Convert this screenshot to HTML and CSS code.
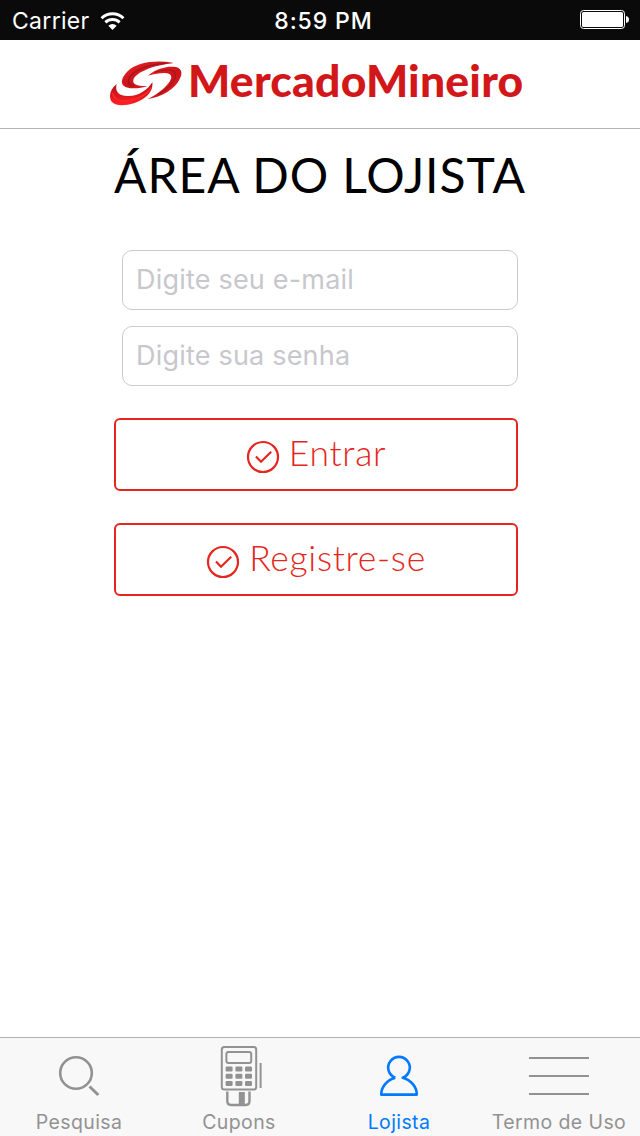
FILE: index.html
```html
<!DOCTYPE html>
<html lang="pt-BR">
<head>
    <meta charset="UTF-8">
    <meta name="viewport" content="width=device-width, initial-scale=1.0">
    <title>Mercado Mineiro</title>
    <link rel="stylesheet" href="styles.css">
</head>
<body>
    <div class="status-bar">
        <div class="carrier">
            <span>Carrier</span>
            <svg class="wifi" width="25" height="20" viewBox="0 0 26 20">
                <path d="M1.6 7.2 A16.2 16.2 0 0 1 24.4 7.2" fill="none" stroke="#fff" stroke-width="3"/>
                <path d="M5.6 11.4 A10.6 10.6 0 0 1 20.4 11.4" fill="none" stroke="#fff" stroke-width="3"/>
                <path d="M13 19.4 L8.7 14.9 A5.9 5.9 0 0 1 17.3 14.9 Z" fill="#fff"/>
            </svg>
        </div>
        <span class="clock">8:59 PM</span>
        <svg class="battery" width="50" height="20" viewBox="0 0 50 20">
            <rect x="0.5" y="0.5" width="44" height="18" rx="3" fill="none" stroke="#fff"/>
            <rect x="2" y="2" width="41" height="15" rx="1.5" fill="#fff"/>
            <path d="M46 6 Q49 6.5 49 9.5 Q49 12.5 46 13 Z" fill="#fff"/>
        </svg>
    </div>

    <header class="header">
        <svg class="logo-mark" width="72" height="46" viewBox="30 30 216 138">
            <defs>
                <linearGradient id="redDown" x1="0" y1="0" x2="0" y2="1">
                    <stop offset="0" stop-color="#a81418"/>
                    <stop offset="0.5" stop-color="#d4181c"/>
                    <stop offset="1" stop-color="#ff2024"/>
                </linearGradient>
                <linearGradient id="redUp" x1="0" y1="0" x2="1" y2="1">
                    <stop offset="0" stop-color="#f02024"/>
                    <stop offset="0.5" stop-color="#c8161b"/>
                    <stop offset="1" stop-color="#ee1c20"/>
                </linearGradient>
            </defs>
            <path fill="url(#redUp)" d="M218 38 C165 30 112 36 83 64 C65 82 60 100 73 109 C87 119 122 115 143 108 C112 109 97 103 100 90 C105 69 157 46 218 40 Z"/>
            <path fill="none" stroke="#9f1519" stroke-width="4" d="M198 40 C145 42 100 61 88 84 C80 98 88 106 102 109"/>
            <path fill="url(#redUp)" d="M144 77 C170 55 203 48 226 51 C244 54 248 67 241 83 C226 118 185 141 143 147 C180 128 206 105 213 86 C219 66 188 65 144 77 Z"/>
            <path fill="none" stroke="#a6171b" stroke-width="4" d="M165 67 C199 55 226 57 226 75 C226 94 204 119 174 134"/>
            <path fill="url(#redDown)" d="M50 102 C29 118 26 141 34 154 C44 169 75 168 102 160 C135 149 161 127 157 97 C142 122 112 140 82 138 C53 136 45 122 50 102 Z"/>
            <path fill="none" stroke="#ff2428" stroke-width="5" d="M38 129 C41 150 62 156 86 152 C118 146 143 132 154 112"/>
        </svg>
        <span class="logo-text">MercadoMineiro</span>
    </header>

    <main class="content">
        <h1 class="title">ÁREA DO LOJISTA</h1>
        <form class="login">
            <input class="field" type="email" placeholder="Digite seu e-mail">
            <input class="field" type="password" placeholder="Digite sua senha">
            <button class="btn" type="button">
                <svg class="check" width="34" height="34" viewBox="0 0 34 34">
                    <circle cx="17" cy="17" r="15"/>
                    <path d="M10 16.5 L15 21.8 L25.2 11.8"/>
                </svg>
                <span class="btn-text">Entrar</span>
            </button>
            <button class="btn" type="button">
                <svg class="check" width="34" height="34" viewBox="0 0 34 34">
                    <circle cx="17" cy="17" r="15"/>
                    <path d="M10 16.5 L15 21.8 L25.2 11.8"/>
                </svg>
                <span class="btn-text">Registre-se</span>
            </button>
        </form>
    </main>

    <nav class="tab-bar">
        <a class="tab">
            <svg width="60" height="62" viewBox="0 0 60 62" fill="none" stroke="currentColor">
                <circle cx="27" cy="28" r="15.8" stroke-width="2.6"/>
                <path d="M40.5 41.5 L49.3 50" stroke-width="3"/>
            </svg>
            <span class="tab-label">Pesquisa</span>
        </a>
        <a class="tab">
            <svg width="60" height="62" viewBox="0 0 60 62" fill="none" stroke="currentColor" stroke-width="2">
                <rect x="12.8" y="2" width="34.4" height="42.6" rx="2.5"/>
                <rect x="17.4" y="7" width="24.8" height="11" rx="2"/>
                <g fill="currentColor" stroke="none">
                    <rect x="16.6" y="21.5" width="7" height="5" rx="1.2"/>
                    <rect x="26.4" y="21.5" width="7" height="5" rx="1.2"/>
                    <rect x="36" y="21.5" width="7" height="5" rx="1.2"/>
                    <rect x="16.6" y="28.7" width="7" height="5" rx="1.2"/>
                    <rect x="26.4" y="28.7" width="7" height="5" rx="1.2"/>
                    <rect x="36" y="28.7" width="7" height="5" rx="1.2"/>
                    <rect x="16.6" y="36" width="7" height="5" rx="1.2"/>
                    <rect x="26.4" y="36" width="7" height="5" rx="1.2"/>
                    <rect x="36" y="36" width="7" height="5" rx="1.2"/>
                    <rect x="29.8" y="47" width="6" height="13"/>
                </g>
                <path d="M51.6 18 V43"/>
                <path d="M18.3 46.5 V56 Q18.3 60 22 60 H36.8 Q40.5 60 40.5 56 V46.5" stroke-width="2.4"/>
            </svg>
            <span class="tab-label">Cupons</span>
        </a>
        <a class="tab active">
            <svg width="60" height="62" viewBox="0 0 60 62" fill="none" stroke="currentColor">
                <path d="M26.3 32.8 A10.8 10.8 0 1 1 33.7 32.8 C42 35 47.8 42 47.8 49.6 H12.2 C12.2 42 18 35 26.3 32.8" stroke-width="2.6" stroke-linejoin="round"/>
            </svg>
            <span class="tab-label">Lojista</span>
        </a>
        <a class="tab">
            <svg width="60" height="62" viewBox="0 0 60 62" stroke="currentColor" stroke-width="2.2">
                <path d="M0 13 H60 M0 31 H60 M0 49 H60"/>
            </svg>
            <span class="tab-label">Termo de Uso</span>
        </a>
    </nav>
</body>
</html>
```
FILE: styles.css
```css
* {
    box-sizing: border-box;
}

body {
    margin: 0;
    height: 1136px;
    display: flex;
    flex-direction: column;
    background-color: #fff;
    font-family: Inter, "Liberation Sans", sans-serif;
    overflow: hidden;
}

.status-bar {
    height: 40px;
    display: grid;
    grid-template-columns: 1fr auto 1fr;
    align-items: center;
    padding: 0 10px 0 12px;
    background-color: #0a0a0a;
    color: #fff;
    font-size: 23px;
}

.carrier {
    display: flex;
    align-items: center;
    gap: 10px;
    padding-top: 1px;
    letter-spacing: 0.3px;
}

.clock {
    padding: 1px 0 0 5px;
    font-weight: 500;
    letter-spacing: 0.9px;
}

.battery {
    justify-self: end;
}

.header {
    height: 89px;
    display: flex;
    align-items: flex-start;
    padding: 20px 0 0 110px;
    border-bottom: 1px solid #b2b2b2;
}

.logo-text {
    margin: -2px 0 0 6px;
    font-family: Lato, sans-serif;
    font-weight: 900;
    font-size: 44.5px;
    line-height: 44px;
    letter-spacing: 0.2px;
    color: #d2171a;
}

.content {
    flex: 1;
}

.title {
    margin: 18px 0 0 114px;
    font-family: Lato, sans-serif;
    font-weight: 400;
    font-size: 48px;
    line-height: 56px;
    letter-spacing: 0.95px;
    color: #000;
    white-space: nowrap;
}

.login {
    width: 404px;
    margin: 47px 0 0 114px;
    display: flex;
    flex-direction: column;
}

.field {
    height: 60px;
    margin: 0 0 16px 8px;
    padding: 0 13px 2px;
    border: 1px solid #cccccc;
    border-radius: 10px;
    font-family: inherit;
    font-size: 27px;
    letter-spacing: 0.2px;
    background-color: #fff;
}

.field::placeholder {
    color: #c7c7cd;
    opacity: 1;
}

.btn {
    height: 73px;
    margin: 16px 0;
    padding: 0;
    display: flex;
    align-items: center;
    justify-content: center;
    gap: 9px;
    border: 2px solid #e52620;
    border-radius: 6px;
    background-color: #fff;
    color: #e52620;
    font-family: Lato, sans-serif;
    font-weight: 300;
    font-size: 35.5px;
    letter-spacing: 0.7px;
}

.btn-text {
    padding-bottom: 5px;
}

.check {
    margin-top: 5px;
    fill: none;
    stroke: #e52620;
    stroke-width: 2.2;
}

.tab-bar {
    height: 99px;
    display: grid;
    grid-template-columns: repeat(4, 160px);
    background-color: #f8f8f8;
    border-top: 1px solid #b2b2b2;
}

.tab {
    display: flex;
    flex-direction: column;
    align-items: center;
    padding: 7px 2px 0 0;
    color: #929292;
}

.tab-label {
    margin-top: 3px;
    font-size: 19.5px;
    line-height: 24px;
    letter-spacing: 0.4px;
    white-space: nowrap;
}

.active {
    color: #007aff;
}
```
